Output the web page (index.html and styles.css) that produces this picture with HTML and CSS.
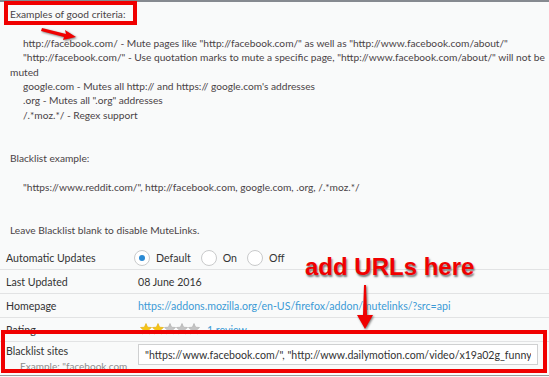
FILE: index.html
```html
<!DOCTYPE html>
<html lang="en">
<head>
    <meta charset="UTF-8">
    <title>MuteLinks Options</title>
    <link rel="stylesheet" href="styles.css">
</head>
<body>
    <div class="panel">
        <div class="desc">
            <div class="line">Examples of good criteria:</div>
            <div class="line blank"></div>
            <div class="line sub">http://facebook.com/ - Mute pages like "http://facebook.com/" as well as "http://www.facebook.com/about/"</div>
            <div class="line sub">"http://facebook.com/" - Use quotation marks to mute a specific page, "http://www.facebook.com/about/" will not be<br>muted</div>
            <div class="line sub">google.com - Mutes all http:// and https:// google.com's addresses</div>
            <div class="line sub">.org - Mutes all ".org" addresses</div>
            <div class="line sub">/.*moz.*/ - Regex support</div>
            <div class="line blank"></div>
            <div class="line blank"></div>
            <div class="line">Blacklist example:</div>
            <div class="line blank"></div>
            <div class="line sub">"https://www.reddit.com/", http://facebook.com, google.com, .org, /.*moz.*/</div>
            <div class="line blank"></div>
            <div class="line blank"></div>
            <div class="line">Leave Blacklist blank to disable MuteLinks.</div>
        </div>

        <div class="details">
            <div class="row">
                <div class="label">Automatic Updates</div>
                <div class="value radios">
                    <label class="radio"><span class="dot checked"></span>Default</label>
                    <label class="radio"><span class="dot"></span>On</label>
                    <label class="radio"><span class="dot"></span>Off</label>
                </div>
            </div>
            <div class="row">
                <div class="label">Last Updated</div>
                <div class="value">08 June 2016</div>
            </div>
            <div class="row">
                <div class="label">Homepage</div>
                <div class="value"><a href="#" class="link">https://addons.mozilla.org/en-US/firefox/addon/mutelinks/?src=api</a></div>
            </div>
            <div class="row">
                <div class="label">Rating</div>
                <div class="value rating">
                    <svg class="stars" width="62" height="12" viewBox="0 0 62 12">
                        <defs>
                            <polygon id="star" points="6,0.5 7.6,4.2 11.5,4.5 8.5,7.1 9.4,11 6,8.9 2.6,11 3.5,7.1 0.5,4.5 4.4,4.2"/>
                        </defs>
                        <use href="#star" x="0" fill="#f6c515" stroke="#e0a800" stroke-width="0.6"/>
                        <use href="#star" x="12" fill="#f6c515" stroke="#e0a800" stroke-width="0.6"/>
                        <use href="#star" x="24" fill="#c4c4c4" stroke="#aaa" stroke-width="0.6"/>
                        <use href="#star" x="36" fill="#c4c4c4" stroke="#aaa" stroke-width="0.6"/>
                        <use href="#star" x="48" fill="#c4c4c4" stroke="#aaa" stroke-width="0.6"/>
                    </svg>
                    <a href="#" class="link review">1 review</a>
                </div>
            </div>
            <div class="row last-row">
                <div class="label">
                    <div>Blacklist sites</div>
                    <div class="hint">Example: "facebook.com,</div>
                </div>
                <div class="value">
                    <input type="text" class="sites" value="&quot;https://www.facebook.com/&quot;, &quot;http://www.dailymotion.com/video/x19a02g_funny-animals-compilation&quot;">
                </div>
            </div>
        </div>
    </div>

    <!-- screenshot annotations -->
    <div class="mark mark-top"></div>
    <svg class="arrow-top" width="40" height="20" viewBox="0 0 40 20">
        <polygon points="2,3 26,9 25,5 36,12 23,15 24,12 1,6" fill="#f00000"/>
    </svg>
    <div class="callout">add URLs here</div>
    <svg class="arrow-down" width="24" height="48" viewBox="0 0 24 48">
        <polygon points="11,0 13,0 14,30 20,30 12,44 4,30 10,30" fill="#f00000"/>
    </svg>
    <div class="mark mark-bottom"></div>
</body>
</html>
```

FILE: styles.css
```css
body {
    margin: 0;
    padding: 0;
    background-color: #f9fafa;
    font-family: Lato, "Open Sans", sans-serif;
    color: #3d3d3d;
    overflow: hidden;
}
.panel {
    border-top: 2px solid #868a90;
    height: 373px;
    border-bottom: 1px solid #9a9a9a;
}
.desc {
    padding: 5px 0 0 10px;
    font-size: 10.2px;
    line-height: 14.4px;
    color: #4a4346;
    margin-bottom: 9px;
}
.line {
    white-space: nowrap;
}
.line.blank {
    height: 14.4px;
}
.line.sub {
    text-indent: 13px;
}
.details {
    font-size: 10.6px;
    color: #333;
}
.row {
    display: flex;
    align-items: center;
    height: 23px;
    border-bottom: 1px solid #e2e3e4;
}
.label {
    width: 132px;
    padding-left: 6px;
    flex-shrink: 0;
}
.value {
    flex: 1;
    white-space: nowrap;
}
.radios {
    display: flex;
    align-items: center;
    margin-left: -4px;
}
.radio {
    display: flex;
    align-items: center;
    margin-right: 10px;
}
.dot {
    width: 14px;
    height: 14px;
    border: 1px solid #c9cacb;
    border-radius: 50%;
    background: #fff;
    margin-right: 6px;
    position: relative;
}
.dot.checked::after {
    content: "";
    position: absolute;
    left: 4px;
    top: 4px;
    width: 6px;
    height: 6px;
    border-radius: 50%;
    background: #2a8ad4;
}
.link {
    color: #3c9ad6;
    text-decoration: none;
}
.rating {
    display: flex;
    align-items: center;
}
.stars {
    margin-left: 2px;
    margin-top: -2px;
}
.review {
    margin-left: 5px;
}
.last-row {
    height: auto;
    align-items: flex-start;
    border-bottom: none;
    padding-top: 1px;
}
.last-row .label {
    line-height: 15px;
    padding-top: 1px;
}
.hint {
    font-size: 10px;
    color: #8c8c8c;
    padding-left: 14px;
}
.sites {
    width: 400px;
    height: 21px;
    box-sizing: border-box;
    border: 1px solid #cfd0d1;
    background: #fff;
    font-family: Lato, "Open Sans", sans-serif;
    font-size: 10.6px;
    color: #333;
    padding: 0 6px;
    margin-top: 1px;
}

.mark {
    position: absolute;
    border: 4px solid #f00000;
}
.mark-top {
    left: 4px;
    top: 1px;
    width: 125px;
    height: 16px;
}
.mark-bottom {
    left: 1px;
    top: 330px;
    width: 538px;
    height: 35px;
}
.arrow-top {
    position: absolute;
    left: 40px;
    top: 25px;
    filter: drop-shadow(1px 1px 1px #777);
}
.callout {
    position: absolute;
    left: 305px;
    top: 253px;
    font-family: "Liberation Sans", Arial, sans-serif;
    font-weight: bold;
    font-size: 24px;
    color: #f00000;
    text-shadow: 1px 2px 2px #777;
}
.arrow-down {
    position: absolute;
    left: 353px;
    top: 285px;
    filter: drop-shadow(1px 1px 1px #777);
}
```
